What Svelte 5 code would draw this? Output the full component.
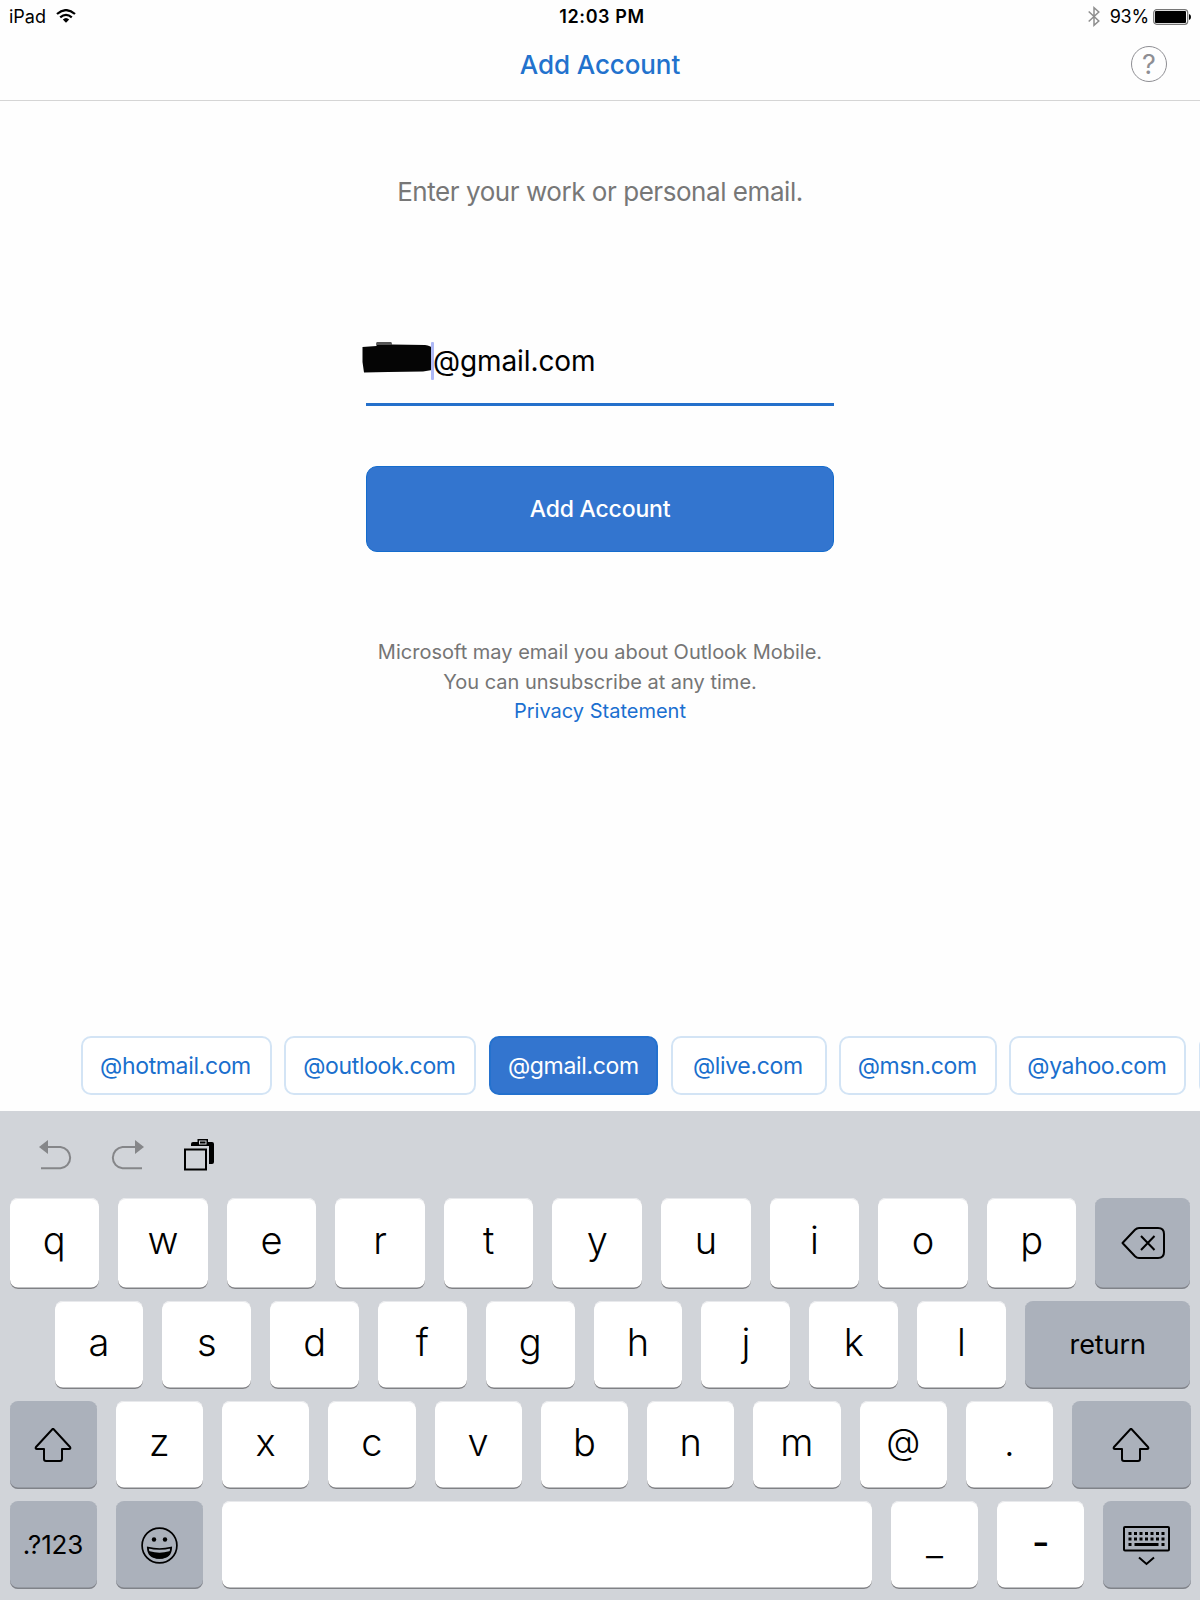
<script lang="ts">
  const domains = [
    { name: "@hotmail.com", width: 190.5 },
    { name: "@outlook.com", width: 192 },
    { name: "@gmail.com", width: 169 },
    { name: "@live.com", width: 156 },
    { name: "@msn.com", width: 157.5 },
    { name: "@yahoo.com", width: 176.5 },
    { name: "", width: 160 },
  ];

  let selected = $state("@gmail.com");

  const topRow = [..."qwertyuiop"];
  const homeRow = [..."asdfghjkl"];
  const bottomRow = [..."zxcvbnm@."];
  const dots = [0, 1, 2, 3, 4, 5, 6];
</script>

{#snippet shiftIcon()}
  <svg width="38" height="35" viewBox="0 0 38 35" fill="none" stroke="#000" stroke-width="2" stroke-linejoin="round">
    <path d="M19 .5 L36 19 Q37 21 35 21 H28 V31 Q28 33 26 33 H12 Q10 33 10 31 V21 H3 Q1 21 2 19 Z" />
  </svg>
{/snippet}

<div class="screen">
  <div class="status">
    <div class="carrier">
      <span>iPad</span>
      <svg width="20" height="14" viewBox="0 0 20 14" fill="none" stroke="#000" stroke-width="2.3">
        <path d="M1 5 Q10 -2.7 19 5" />
        <path d="M4.2 8.3 Q10 3.4 15.8 8.3" />
        <path d="M6.8 10.6 Q10 7.6 13.2 10.6 L10 13.8 Z" fill="#000" stroke="none" />
      </svg>
    </div>
    <span class="time">12:03 PM</span>
    <div class="power">
      <svg width="12" height="21" viewBox="0 0 12 21" fill="none" stroke="#8e8e8e" stroke-width="1.5">
        <path d="M.7 5.5 L10.8 15 L6 19.3 V1.7 L10.8 6 L.7 15.5" />
      </svg>
      <span class="percent">93%</span>
      <svg width="38" height="16" viewBox="0 0 38 16">
        <rect x=".7" y=".7" width="34" height="14.6" rx="3" fill="none" stroke="#777" stroke-width="1.2" />
        <rect x="2" y="2" width="31" height="12" rx="1" fill="#000" />
        <path d="M36 5 Q38 5.5 38 8 Q38 10.5 36 11 Z" fill="#000" />
      </svg>
    </div>
  </div>

  <header class="nav">
    <h1>Add Account</h1>
    <button class="help" aria-label="Help">?</button>
  </header>

  <main>
    <p class="prompt">Enter your work or personal email.</p>

    <div class="email">
      <svg class="redaction" width="72" height="33" viewBox="0 0 72 33">
        <path d="M.5 5 L14.5 4 V1 H29.5 V2.5 L63 3 Q69 4 70 6 V28 L61 29.5 L26 30 L2 30.5 L.5 20 Z" fill="#050505" />
        <path d="M14.5 0 H29.5 V3 H14.5 Z" fill="#555" />
      </svg>
      <span class="caret"></span>
      <span class="address">@gmail.com</span>
    </div>

    <button class="submit">Add Account</button>

    <p class="notice">
      Microsoft may email you about Outlook Mobile.<br />
      You can unsubscribe at any time.<br />
      <a href="#privacy">Privacy Statement</a>
    </p>

    <div class="domains">
      {#each domains as domain}
        <button
          class:active={domain.name === selected}
          style:width="{domain.width}px"
          onclick={() => (selected = domain.name)}
        >
          {domain.name}
        </button>
      {/each}
    </div>
  </main>

  <div class="keyboard">
    <div class="toolbar">
      <svg width="34" height="31" viewBox="0 0 34 31" fill="none" stroke="#858689" stroke-width="2">
        <path d="M8 7 H21.5 A10.7 10.7 0 0 1 21.5 28.3 H2" />
        <path d="M0 7 L9 0 V14 Z" fill="#858689" stroke="none" />
      </svg>
      <svg width="34" height="31" viewBox="0 0 34 31" fill="none" stroke="#858689" stroke-width="2">
        <path d="M25 7 H11.5 A10.7 10.7 0 0 0 11.5 28.3 H31" />
        <path d="M33 7 L24 0 V14 Z" fill="#858689" stroke="none" />
      </svg>
      <svg class="paste" width="31" height="32" viewBox="0 0 31 32">
        <path d="M7 7 V5 Q7 3 9 3 H13.5 V0 H24 V3 H28 Q30 3 30 5 V23 Q30 25 28 25 H25 V7 Z" fill="#000" />
        <rect x="15.5" y="2" width="6.5" height="3" fill="none" stroke="#d1d4d9" stroke-width="1" />
        <rect x="1" y="10.5" width="21" height="20" fill="none" stroke="#000" stroke-width="2" />
      </svg>
    </div>

    <div class="row first">
      {#each topRow as key}
        <button class="key">{key}</button>
      {/each}
      <button class="key dark delete" aria-label="Delete">
        <svg width="44" height="34" viewBox="0 0 44 34" fill="none" stroke="#000" stroke-width="2" stroke-linejoin="round">
          <path d="M1.5 16 L14 2.8 Q15.8 1 18 1 H37 Q43 1 43 7 V25 Q43 31 37 31 H18 Q15.8 31 14 29.2 Z" />
          <path d="M20 9 L33.5 23 M33.5 9 L20 23" />
        </svg>
      </button>
    </div>

    <div class="row second">
      {#each homeRow as key}
        <button class="key">{key}</button>
      {/each}
      <button class="key dark return">return</button>
    </div>

    <div class="row">
      <button class="key dark" aria-label="Shift">{@render shiftIcon()}</button>
      {#each bottomRow as key}
        <button class="key" class:at={key === "@"}>{key}</button>
      {/each}
      <button class="key dark wide-shift" aria-label="Shift">{@render shiftIcon()}</button>
    </div>

    <div class="row last">
      <button class="key dark symbols">.?123</button>
      <button class="key dark" aria-label="Emoji">
        <svg width="37" height="37" viewBox="0 0 37 37" fill="none" stroke="#000" stroke-width="1.7">
          <circle cx="18.5" cy="18.5" r="17.4" />
          <circle cx="13" cy="12.5" r="2.2" fill="#000" stroke="none" />
          <circle cx="24" cy="12.5" r="2.2" fill="#000" stroke="none" />
          <path d="M6.8 20.5 Q18.5 23.5 30.2 20.5 Q30 31 18.5 31 Q7 31 6.8 20.5 Z" />
          <path d="M8.5 25 Q18.5 28 28.5 25 Q26 31 18.5 31 Q11 31 8.5 25 Z" fill="#000" />
        </svg>
      </button>
      <button class="key space" aria-label="Space"></button>
      <button class="key">_</button>
      <button class="key dash">-</button>
      <button class="key dark" aria-label="Hide keyboard">
        <svg class="hide" width="47" height="40" viewBox="0 0 47 40" fill="none" stroke="#000" stroke-width="2">
          <rect x="1" y="1" width="45" height="23.5" rx="1" />
          {#each dots as dot}
            <rect x={5.5 + dot * 5.5} y="6" width="3" height="3" fill="#000" stroke="none" />
            <rect x={5.5 + dot * 5.5} y="11.5" width="3" height="3" fill="#000" stroke="none" />
          {/each}
          <path d="M5.5 18.5 H8.5 M11.5 18.5 H35.5 M38.5 18.5 H41.5" stroke-width="3" />
          <path d="M16 31.5 L23.5 38 L31 31.5" />
        </svg>
      </button>
    </div>
  </div>
</div>

<style>
  :global(body) {
    background: #fff;
  }

  .screen {
    display: flex;
    flex-direction: column;
    width: 1200px;
    height: 1600px;
    overflow: hidden;
    background: #fefefe;
    color: #000;
    font-family: Inter, "Liberation Sans", sans-serif;
  }

  button {
    box-sizing: border-box;
    border: none;
    padding: 0;
    flex-shrink: 0;
    font-family: inherit;
  }

  h1,
  p {
    margin: 0;
  }

  .status {
    display: grid;
    grid-template-columns: 1fr auto 1fr;
    align-items: center;
    height: 32px;
    padding: 0 9px;
    font-size: 18px;
    line-height: 33px;
  }

  .carrier,
  .power {
    display: flex;
    align-items: center;
  }

  .carrier {
    gap: 10px;
  }

  .carrier svg {
    margin-top: -1px;
  }

  .time {
    font-weight: 600;
    letter-spacing: 0.6px;
    padding-left: 4px;
  }

  .power {
    justify-content: flex-end;
  }

  .percent {
    margin: 0 4px 0 10px;
    letter-spacing: -0.2px;
  }

  .nav {
    display: flex;
    align-items: center;
    justify-content: center;
    height: 68px;
    border-bottom: 1px solid #d5d5d5;
    position: relative;
  }

  h1 {
    margin-top: -3px;
    font-size: 26px;
    line-height: 32px;
    font-weight: 500;
    letter-spacing: -0.1px;
    color: #2272cd;
  }

  .help {
    position: absolute;
    right: 33px;
    top: 14px;
    width: 36px;
    height: 36px;
    border: 1.5px solid #8e8e93;
    border-radius: 50%;
    background: transparent;
    color: #8e8e93;
    font-size: 27px;
    line-height: 33px;
  }

  main {
    display: flex;
    flex-direction: column;
    align-items: center;
    height: 1010px;
    box-sizing: border-box;
    padding: 75px 0 16px;
  }

  .prompt {
    font-size: 26px;
    line-height: 32px;
    letter-spacing: -0.45px;
    color: #777;
  }

  .email {
    display: flex;
    align-items: flex-start;
    box-sizing: border-box;
    width: 468px;
    height: 64px;
    margin-top: 134px;
    border-bottom: 3px solid #2470cb;
  }

  .redaction {
    flex-shrink: 0;
    margin-left: -4px;
  }

  .caret {
    width: 3px;
    height: 38px;
    margin-left: -3px;
    border-radius: 1px;
    background: #adb8f6;
  }

  .address {
    margin-left: -1px;
    font-size: 28px;
    line-height: 38px;
    letter-spacing: -0.1px;
  }

  .submit {
    width: 468px;
    height: 86px;
    margin-top: 60px;
    border: 1px solid #146ccd;
    border-radius: 11px;
    background: #3375cf;
    color: #fff;
    font-size: 23px;
    font-weight: 500;
    letter-spacing: -0.2px;
  }

  .notice {
    margin-top: 86px;
    font-size: 20px;
    line-height: 29.6px;
    text-align: center;
    color: #757575;
  }

  .notice a {
    color: #1a6fd0;
    text-decoration: none;
  }

  .domains {
    display: flex;
    gap: 12.7px;
    align-self: flex-start;
    margin: auto 0 0 81px;
  }

  .domains button {
    height: 59px;
    border: 2px solid #d3e4f5;
    border-radius: 10px;
    background: #fff;
    color: #1a6fcd;
    font-size: 23px;
    letter-spacing: -0.35px;
    line-height: 57px;
    padding-right: 1.5px;
  }

  .domains .active {
    border-color: #2471ce;
    background: #3375cf;
    color: #fff;
    padding-right: 0;
  }

  .keyboard {
    display: flex;
    flex-direction: column;
    gap: 12px;
    flex: 1;
    padding: 0 9.5px;
    background: #d1d4d9;
  }

  .toolbar {
    display: flex;
    align-items: flex-start;
    gap: 38px;
    height: 46px;
    padding: 29px 0 0 29.5px;
  }

  .paste {
    margin-top: -1px;
    margin-left: 1px;
  }

  .row {
    display: flex;
    gap: 19px;
    height: 88px;
  }

  .first {
    height: 91px;
  }

  .second {
    padding-left: 45px;
  }

  .key {
    flex: 1 0 0;
    min-width: 0;
    display: flex;
    align-items: center;
    justify-content: center;
    padding-bottom: 7px;
    border-radius: 8px;
    background: #fff;
    box-shadow: inset 0 -1.5px #808185, inset 0 1px #e8e9ec;
    color: #000;
    font-size: 38px;
    font-weight: 300;
    line-height: 46px;
  }

  .dark {
    padding-bottom: 0;
    background: #abb1bb;
    box-shadow: inset 0 -1.5px #808389;
  }

  .delete {
    flex: 0 0 95px;
  }

  .return {
    flex: 0 0 165.5px;
    font-size: 27px;
    font-weight: 400;
    letter-spacing: -0.1px;
  }

  .wide-shift {
    flex: 0 0 118.5px;
  }

  .at {
    padding-bottom: 9px;
    font-size: 35px;
  }

  .last .key {
    flex: 0 0 87.2px;
  }

  .last .space {
    flex: 1;
  }

  .last .symbols {
    font-size: 26px;
    font-weight: 400;
    letter-spacing: -0.1px;
  }

  .last .dash {
    font-weight: 500;
  }

  .hide {
    margin-top: 2px;
  }
</style>
